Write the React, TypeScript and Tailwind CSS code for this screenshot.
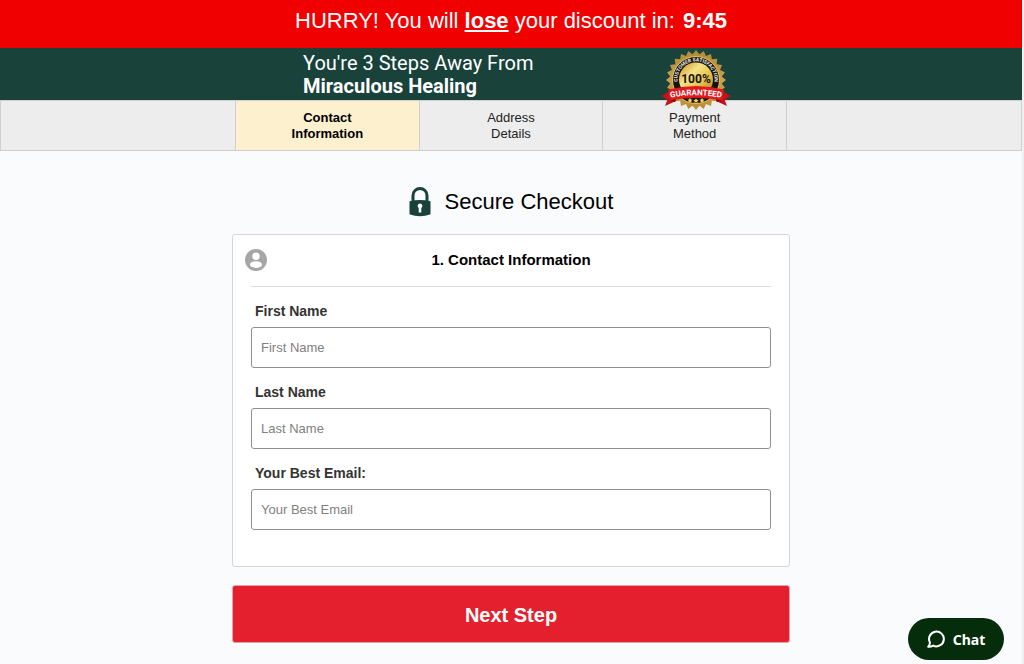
import { useState } from "react";

interface IField {
  id: string;
  label: string;
  placeholder: string;
  type: string;
}

const steps = [
  ["Contact", "Information"],
  ["Address", "Details"],
  ["Payment", "Method"],
];

const fields: IField[] = [
  { id: "firstName", label: "First Name", placeholder: "First Name", type: "text" },
  { id: "lastName", label: "Last Name", placeholder: "Last Name", type: "text" },
  { id: "email", label: "Your Best Email:", placeholder: "Your Best Email", type: "email" },
];

// zigzag outline of the gold seal
const sealPoints = Array.from({ length: 48 }, (_, i) => {
  const r = i % 2 === 0 ? 30 : 26;
  const a = (i * Math.PI) / 24 - Math.PI / 2;
  return `${(35 + r * Math.cos(a)).toFixed(2)},${(30 + r * Math.sin(a)).toFixed(2)}`;
}).join(" ");

const GuaranteeSeal = () => (
  <svg viewBox="0 0 70 60" className="h-[60px] w-[70px] font-[Roboto,sans-serif] font-bold" role="img" aria-label="100% customer satisfaction guaranteed">
    <defs>
      <linearGradient id="gold" x1="0" y1="0" x2="1" y2="1">
        <stop offset="0" stopColor="#c58f20" />
        <stop offset="0.35" stopColor="#f6e387" />
        <stop offset="0.6" stopColor="#e8c54c" />
        <stop offset="1" stopColor="#b07a18" />
      </linearGradient>
      <linearGradient id="rim" x1="0" y1="0" x2="0" y2="1">
        <stop offset="0" stopColor="#b18a36" />
        <stop offset="0.5" stopColor="#c9a04a" />
        <stop offset="1" stopColor="#b98d35" />
      </linearGradient>
      <path id="arc" d="M18.5 38.5 A18.6 18.6 0 1 1 51.5 38.5" />
      <path id="ribbonArc" d="M8 48.2 Q35 42.2 62 48.2" />
    </defs>
    <polygon points={sealPoints} fill="url(#rim)" />
    <circle cx="35" cy="30" r="23.5" fill="#17130c" stroke="#e3c262" strokeWidth="1" />
    <circle cx="35" cy="29.5" r="17" fill="url(#gold)" />
    <text fill="#eeeeee" fontSize="5">
      <textPath href="#arc" startOffset="50%" textAnchor="middle">
        CUSTOMER SATISFACTION
      </textPath>
    </text>
    <text x="35" y="33" textAnchor="middle" fill="#17130c" fontSize="12">
      100%
    </text>
    <path d="M0 46 L11 40 L15 51 L4 56 L6.5 49.5 Z" fill="#c31218" />
    <path d="M70 46 L59 40 L55 51 L66 56 L63.5 49.5 Z" fill="#c31218" />
    <path d="M7 39.5 Q35 32.5 63 39.5 L61 50.5 Q35 45 9 50.5 Z" fill="#e0191f" />
    <path d="M9 50.5 L15 49.2 L14 52 Z M61 50.5 L55 49.2 L56 52 Z" fill="#7d0a0e" />
    <text fill="#ffffff" fontSize="8">
      <textPath href="#ribbonArc" startOffset="50%" textAnchor="middle">
        GUARANTEED
      </textPath>
    </text>
    <g fill="#f3d667">
      <path id="star" d="M35 48.2 l.8 1.6 1.8.2 -1.3 1.2 .3 1.8 -1.6-.9 -1.6.9 .3-1.8 -1.3-1.2 1.8-.2 z" />
      <use href="#star" x="-6" y="-0.4" />
      <use href="#star" x="6" y="-0.4" />
    </g>
  </svg>
);

const LockIcon = () => (
  <svg viewBox="0 0 22 30" className="h-[30px] w-[22px]" aria-hidden="true">
    <path d="M4 14 V8.5 a7 7 0 0 1 14 0 V14" fill="none" stroke="#19423b" strokeWidth="3" />
    <path d="M0.5 14.2 Q11 11.6 21.5 14.2 V27.2 Q11 31.2 0.5 27.2 Z" fill="#19423b" />
    <path d="M11 16.6 a2.4 2.4 0 0 1 1.3 4.4 V25.6 H9.7 V21 A2.4 2.4 0 0 1 11 16.6 Z" fill="#ffffff" />
  </svg>
);

const UserIcon = () => (
  <svg viewBox="0 0 22 22" className="h-[22px] w-[22px]" aria-hidden="true">
    <circle cx="11" cy="11" r="11" fill="#a6a6a6" />
    <circle cx="11" cy="7.2" r="3.7" fill="#ffffff" />
    <path d="M11 12.2 c3.6 0 6 1.6 6 3.4 c0 2 -2.8 3.4 -6 3.4 s-6 -1.4 -6 -3.4 c0 -1.8 2.4 -3.4 6 -3.4 Z" fill="#ffffff" />
  </svg>
);

const ChatIcon = () => (
  <svg viewBox="0 0 18 18" className="h-[18px] w-[18px]" aria-hidden="true">
    <path
      d="M2.9 12.4 A7.4 7.4 0 1 1 6.2 15.6 Q4 17 1.2 16.8 Q3 15 2.9 12.4 Z"
      fill="none"
      stroke="#ffffff"
      strokeWidth="2"
      strokeLinejoin="round"
    />
  </svg>
);

const App = () => {
  const [values, setValues] = useState<Record<string, string>>({});

  return (
    <div className="min-h-screen border-r-2 border-[#f0f0f0] bg-[#fafbfd] font-['Liberation_Sans',Arial,sans-serif] text-black">
      <div className="flex h-12 items-center justify-center gap-2 bg-[#f10000] pb-2 text-[22px] text-white">
        <p>
          HURRY! You will <b className="underline">lose</b> your discount in:
        </p>
        <b>9:45</b>
      </div>

      <header className="h-13 bg-[#19423b]">
        <div className="mx-auto flex max-w-[440px] justify-between pl-3">
          <h1 className="pt-1 font-[Roboto,sans-serif] text-[20px] leading-[23px] text-white">
            You're 3 Steps Away From
            <br />
            <b>Miraculous Healing</b>
          </h1>
          <div className="relative w-[70px]">
            <div className="absolute top-0.5 left-0">
              <GuaranteeSeal />
            </div>
          </div>
        </div>
      </header>

      <nav className="border border-[#cfcfcf] bg-[#ededed]">
        <ol className="mx-auto grid max-w-[552px] grid-cols-3 border-l border-[#cfcfcf]">
          {steps.map(([first, second], index) => (
            <li
              key={first}
              className={
                index === 0
                  ? "border-r border-[#cfcfcf] bg-[#fcf0cf] pt-[9px] pb-2 text-center text-[13px] leading-4 font-bold"
                  : "border-r border-[#cfcfcf] pt-[9px] pb-2 text-center text-[13px] leading-4 text-[#222222]"
              }
            >
              {first}
              <br />
              {second}
            </li>
          ))}
        </ol>
      </nav>

      <main className="mx-auto max-w-[558px]">
        <div className="flex items-center justify-center gap-3.5 pt-9 pb-[17px]">
          <LockIcon />
          <h2 className="text-[22px] leading-[30px]">Secure Checkout</h2>
        </div>

        <form onSubmit={(e) => e.preventDefault()}>
          <section className="rounded-[3px] border border-[#d3d5d8] bg-white px-[18px] pb-9">
            <div className="relative border-b border-[#dddddd] pt-[15px] pb-4">
              <div className="absolute top-3.5 -left-1.5">
                <UserIcon />
              </div>
              <h3 className="text-center text-[15px] leading-5 font-bold">1. Contact Information</h3>
            </div>
            <div className="flex flex-col gap-[15px] pt-[15px]">
              {fields.map((field) => (
                <div key={field.id}>
                  <label htmlFor={field.id} className="block px-1 pb-[7px] text-[14px] leading-[18px] font-bold text-[#333333]">
                    {field.label}
                  </label>
                  <input
                    id={field.id}
                    type={field.type}
                    placeholder={field.placeholder}
                    value={values[field.id] ?? ""}
                    onChange={(e) => setValues({ ...values, [field.id]: e.target.value })}
                    className="block h-[41px] w-full rounded-[3px] border border-[#8f8f8f] bg-white px-[9px] text-[13px] placeholder:text-[#808080]"
                  />
                </div>
              ))}
            </div>
          </section>

          <button
            type="submit"
            className="mt-[18px] h-[58px] w-full rounded-[3px] border border-[#e5a3a7] bg-[#e5202e] pt-0.5 text-[20px] font-bold text-white"
          >
            Next Step
          </button>
        </form>
      </main>

      <button
        type="button"
        className="fixed right-5 bottom-1 flex h-[42px] w-24 items-center justify-center gap-2 rounded-full bg-[#052c0b] font-['Noto_Sans',sans-serif] text-[14px] font-bold text-white"
      >
        <ChatIcon />
        Chat
      </button>
    </div>
  );
};

export default App;
